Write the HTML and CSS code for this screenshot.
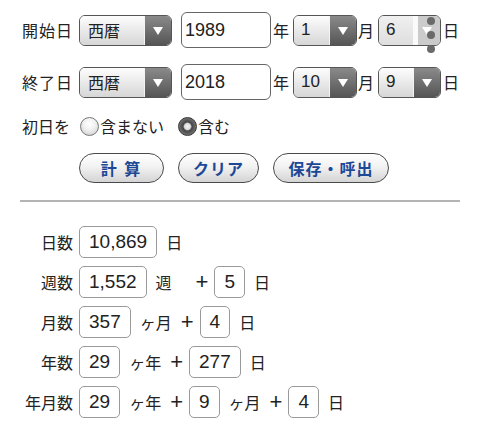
FILE: index.html
```html
<!DOCTYPE html>
<html lang="ja">
<head>
<meta charset="utf-8">
<title>日数計算</title>
<link rel="stylesheet" href="styles.css">
</head>
<body>
<div class="form">
  <div class="date-row">
    <span class="label">開始日</span>
    <div class="select era"><span class="value">西暦</span><span class="arrow"></span></div>
    <div class="year-input">1989</div>
    <span class="unit">年</span>
    <div class="select month"><span class="value">1</span><span class="arrow"></span></div>
    <span class="unit">月</span>
    <div class="select day active"><span class="value">6</span><span class="strip"></span><span class="arrow"></span>
      <span class="handle"><i></i><i></i><i></i></span>
    </div>
    <span class="unit">日</span>
  </div>
  <div class="date-row">
    <span class="label">終了日</span>
    <div class="select era"><span class="value">西暦</span><span class="arrow"></span></div>
    <div class="year-input">2018</div>
    <span class="unit">年</span>
    <div class="select month"><span class="value">10</span><span class="arrow"></span></div>
    <span class="unit">月</span>
    <div class="select day"><span class="value">9</span><span class="arrow"></span></div>
    <span class="unit">日</span>
  </div>
  <div class="radio-row">
    <span class="label">初日を</span>
    <span class="radio"></span><span class="radio-text">含まない</span>
    <span class="radio checked"></span><span class="radio-text">含む</span>
  </div>
  <div class="button-row">
    <button class="btn btn-calc">計 算</button>
    <button class="btn btn-clear">クリア</button>
    <button class="btn btn-save">保存・呼出</button>
  </div>
</div>
<hr class="divider">
<div class="results">
  <div class="res-row">
    <span class="res-label">日数</span>
    <span class="box">10,869</span><span class="u">日</span>
  </div>
  <div class="res-row">
    <span class="res-label">週数</span>
    <span class="box">1,552</span><span class="u">週</span><span class="plus wide">+</span>
    <span class="box">5</span><span class="u">日</span>
  </div>
  <div class="res-row">
    <span class="res-label">月数</span>
    <span class="box">357</span><span class="u">ヶ月</span><span class="plus">+</span>
    <span class="box">4</span><span class="u">日</span>
  </div>
  <div class="res-row">
    <span class="res-label">年数</span>
    <span class="box">29</span><span class="u">ヶ年</span><span class="plus">+</span>
    <span class="box">277</span><span class="u">日</span>
  </div>
  <div class="res-row">
    <span class="res-label">年月数</span>
    <span class="box">29</span><span class="u">ヶ年</span><span class="plus">+</span>
    <span class="box">9</span><span class="u">ヶ月</span><span class="plus">+</span>
    <span class="box">4</span><span class="u">日</span>
  </div>
</div>
</body>
</html>
```
FILE: styles.css
```css
html, body {
  margin: 0;
  padding: 0;
  background: #fff;
}
body {
  font-family: "Noto Sans CJK JP", "Liberation Sans", sans-serif;
  font-size: 16px;
  color: #222;
  width: 480px;
  height: 445px;
  overflow: hidden;
}
.form {
  padding: 12px 0 0 22px;
}
.date-row {
  display: flex;
  align-items: center;
  height: 36px;
  margin-bottom: 16px;
}
.label {
  width: 50px;
  margin-right: 7px;
  letter-spacing: 1px;
  white-space: nowrap;
}
.select {
  position: relative;
  display: flex;
  height: 29px;
  border: 1px solid #555;
  border-radius: 6px;
  overflow: visible;
  box-sizing: content-box;
}
.select .value {
  flex: 1;
  display: flex;
  align-items: center;
  padding-left: 7px;
  font-family: "Liberation Sans", "Noto Sans CJK JP", sans-serif;
  font-size: 17px;
  background: linear-gradient(#fdfdfd, #d6d6d6);
  border-radius: 5px 0 0 5px;
  border-right: 1px solid #f4f4f4;
}
.select.era .value {
  font-family: "Noto Sans CJK JP", sans-serif;
  font-size: 16px;
  padding-left: 8px;
}
.select .arrow {
  width: 26px;
  background: linear-gradient(#8a8a8a, #555);
  border-radius: 0 5px 5px 0;
  position: relative;
}
.select .arrow::after {
  content: "";
  position: absolute;
  left: 8px;
  top: 11px;
  border-left: 5px solid transparent;
  border-right: 5px solid transparent;
  border-top: 8px solid #fff;
}
.select.era { width: 91px; }
.year-input {
  width: 85px;
  height: 34px;
  margin-left: 9px;
  border: 1px solid #666;
  border-radius: 6px;
  font-family: "Liberation Sans", sans-serif;
  font-size: 18px;
  line-height: 34px;
  padding-left: 3px;
  background: #fff;
}
.unit {
  margin: 0 4px 0 2px;
}
.select.month { width: 62px; }
.date-row .select.month + .unit { margin: 0 4px 0 1px; }
.select.day { width: 61px; }
.select.active .value {
  background: linear-gradient(#f0f0f0, #dedede);
  border-right: none;
}
.select.active .strip {
  width: 5px;
  background: #fafafa;
}
.select.active .arrow {
  width: 22px;
  background: #cbcbcb;
}
.select.active .arrow::after {
  left: 4px;
}
.handle {
  position: absolute;
  left: 48px;
  top: 1px;
  display: flex;
  flex-direction: column;
  gap: 6px;
}
.handle i {
  display: block;
  width: 8px;
  height: 8px;
  border-radius: 50%;
  background: #6a6a6a;
}
.radio-row {
  display: flex;
  align-items: center;
  height: 20px;
  margin-top: 2px;
}
.radio-row .label {
  width: auto;
  margin-right: 10px;
  letter-spacing: 0;
}
.radio {
  width: 17px;
  height: 17px;
  border: 1px solid #777;
  border-radius: 50%;
  background: radial-gradient(circle at 50% 35%, #fff 0, #f2f2f2 40%, #c8c8c8 100%);
}
.radio.checked {
  border-color: #333;
  background: radial-gradient(circle at 50% 50%, #f4f4f4 0, #ddd 3px, #444 4.5px, #555 6px, #777 9px);
  margin-left: 14px;
}
.radio-text {
  margin-left: 1px;
}
.button-row {
  display: flex;
  gap: 14px;
  padding-left: 57px;
  margin-top: 17px;
}
.btn {
  height: 30px;
  border: 1.5px solid #4a4a4a;
  border-radius: 15px;
  background: linear-gradient(#ffffff, #f2f2f2 45%, #d4d4d4);
  color: #1d4896;
  font-family: "Noto Sans CJK JP", sans-serif;
  font-weight: bold;
  font-size: 16px;
  padding: 0;
  letter-spacing: 1px;
}
.btn-calc { width: 85px; letter-spacing: 2px; }
.btn-clear { width: 81px; }
.btn-save { width: 116px; }
.divider {
  margin: 17px 20px 0 20px;
  border: none;
  border-top: 2px solid #b4b4b4;
  height: 0;
}
.results {
  padding-top: 24px;
}
.res-row {
  display: flex;
  align-items: center;
  height: 32px;
  margin-bottom: 8px;
}
.res-label {
  width: 73px;
  text-align: right;
  margin-right: 6px;
  white-space: nowrap;
}
.box {
  height: 30px;
  border: 1px solid #9a9a9a;
  border-radius: 5px;
  padding: 0 9px;
  font-family: "Liberation Sans", sans-serif;
  font-size: 19px;
  line-height: 30px;
  background: #fff;
}
.u {
  margin-left: 9px;
  white-space: nowrap;
}
.plus {
  font-family: "Liberation Sans", sans-serif;
  font-size: 22px;
  margin: 0 6px 0 9px;
}
.plus.wide {
  margin-left: 24px;
}
```
